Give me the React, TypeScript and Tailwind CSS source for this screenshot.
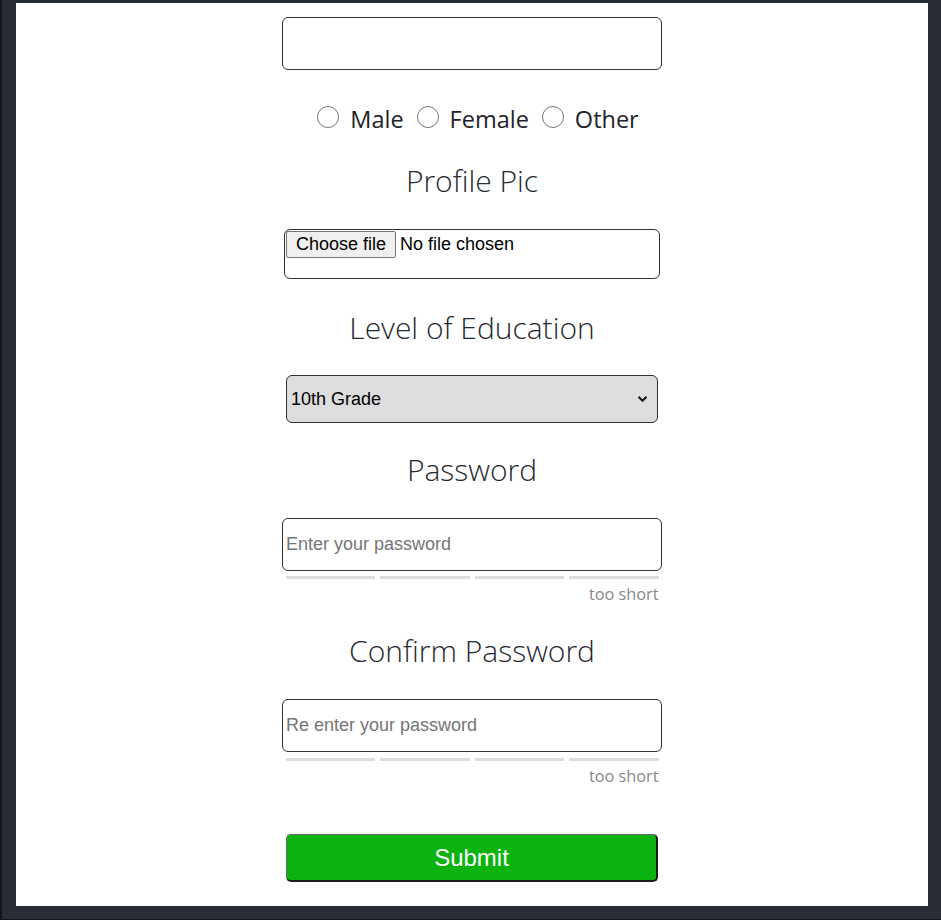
const titleCls =
  "h-[34px] leading-[34px] text-[30px] font-light text-[#262a31] font-['Open_Sans',sans-serif]";
const arial = "font-['Liberation_Sans',Arial,sans-serif]";

const Radio = ({ label }: { label: string }) => (
  <label className="flex items-center">
    <span className="mb-[6px] h-[22px] w-[22px] rounded-full border border-[#767676] bg-white" />
    <span className="ml-[11px] mr-[13px] text-[23.5px] text-[#1f232a]">{label}</span>
  </label>
);

const Strength = () => (
  <div className="flex w-[373px] flex-col">
    <div className="grid h-[3px] grid-cols-4 gap-[5px]">
      <div className="bg-[#dddddd]" />
      <div className="bg-[#dddddd]" />
      <div className="bg-[#dddddd]" />
      <div className="bg-[#dddddd]" />
    </div>
    <p className="mt-[7px] h-[16px] text-right text-[16.3px] leading-[16px] text-[#898989]">
      too short
    </p>
  </div>
);

const TextBox = ({ placeholder }: { placeholder?: string }) => (
  <input
    type="text"
    placeholder={placeholder}
    className={`h-[53px] w-[380px] rounded-[6px] border border-[#2e3138] bg-white px-[3px] text-[18px] text-black outline-none placeholder:text-[#757575] ${arial}`}
  />
);

export default function App() {
  return (
    <div className="flex min-h-[920px] w-full flex-col border-b border-l-2 border-b-[#151515] border-l-[#151515] bg-[#282c34] pb-[13px] pl-[14px] pr-[13px] pt-[3px]">
      <form
        onSubmit={(e) => e.preventDefault()}
        className="flex h-[903px] flex-col items-center bg-white pt-[14px] font-['Open_Sans',sans-serif]"
      >
        <TextBox />

        <div className="mt-[35px] flex h-[30px] items-center pl-[25px]">
          <Radio label="Male" />
          <Radio label="Female" />
          <Radio label="Other" />
        </div>

        <h2 className={`mt-[29px] ${titleCls}`}>Profile Pic</h2>
        <div className="mt-[31px] h-[50px] w-[376px] rounded-[6px] border border-[#2e3138] pl-[1px] pt-[1px]">
          <div className={`flex items-center text-[18px] text-black ${arial}`}>
            <span className="flex h-[27px] items-center rounded-[2px] border border-[#767676] bg-[#efefef] px-[9px]">
              Choose file
            </span>
            <span className="ml-[4px]">No file chosen</span>
          </div>
        </div>

        <h2 className={`mt-[32px] ${titleCls}`}>Level of Education</h2>
        <div
          className={`mt-[30px] flex h-[48px] w-[372px] items-center justify-between rounded-[6px] border border-[#2e3138] bg-[#dddddd] pl-[4px] pr-[9px] text-[18px] text-black ${arial}`}
        >
          <span>10th Grade</span>
          <svg width="11" height="8" viewBox="0 0 11 8" fill="none">
            <path d="M1.5 1.8 5.5 5.8 9.5 1.8" stroke="#111" strokeWidth="2" />
          </svg>
        </div>

        <h2 className={`mt-[30px] ${titleCls}`}>Password</h2>
        <div className="mt-[31px]">
          <TextBox placeholder="Enter your password" />
        </div>
        <div className="mt-[5px]">
          <Strength />
        </div>

        <h2 className={`mt-[32px] ${titleCls}`}>Confirm Password</h2>
        <div className="mt-[31px]">
          <TextBox placeholder="Re enter your password" />
        </div>
        <div className="mt-[6px]">
          <Strength />
        </div>

        <button
          type="submit"
          className={`mt-[50px] h-[48px] w-[372px] rounded-[5px] border border-[#6b6b6b] border-b-2 border-r-2 border-b-[#1d1d1d] border-r-[#1d1d1d] bg-[#0ab30e] text-[24px] text-white ${arial}`}
        >
          Submit
        </button>
      </form>
    </div>
  );
}
